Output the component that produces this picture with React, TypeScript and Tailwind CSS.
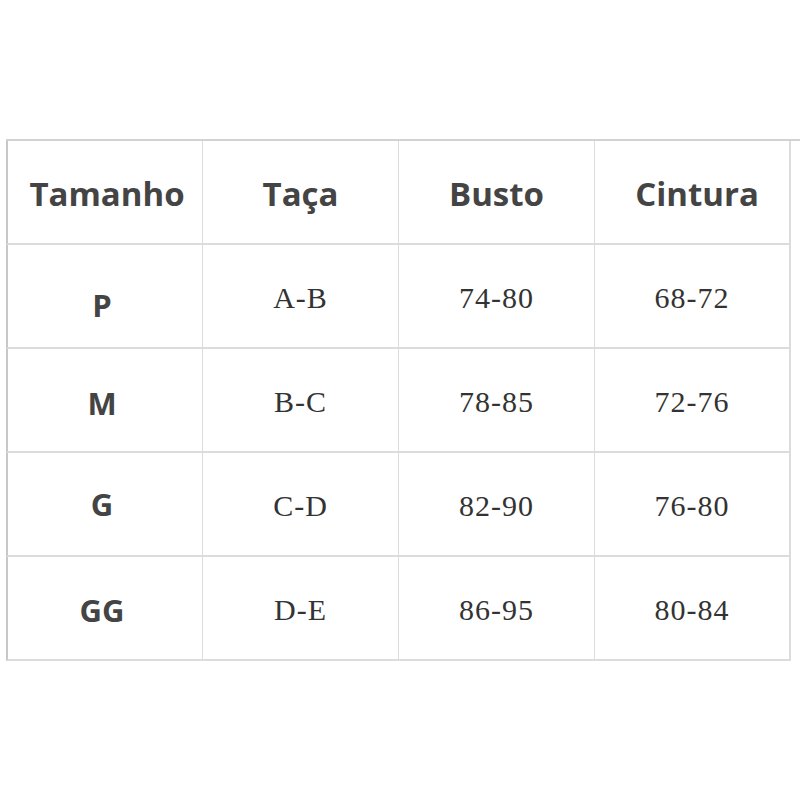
import React from "react";

const rows = [
  { size: "P", cup: "A-B", bust: "74-80", waist: "68-72", off: "pt-[18px]" },
  { size: "M", cup: "B-C", bust: "78-85", waist: "72-76", off: "pt-[6px]" },
  { size: "G", cup: "C-D", bust: "82-90", waist: "76-80", off: "" },
  { size: "GG", cup: "D-E", bust: "86-95", waist: "80-84", off: "pt-[4px]" },
];

const sans = "font-['Open_Sans',sans-serif] font-bold text-[#444444]";
const serif = "font-['Liberation_Serif',serif] text-[30px] tracking-[1px] text-[#333333]";

export default function App() {
  return (
    <div className="w-[800px] h-[800px] bg-white overflow-hidden pt-[139px] pl-[6px]">
      <div className="grid grid-cols-[197px_196px_196px_196px_1fr] border-t-2 border-[#d2d2d2]">
        {/* header */}
        <div className={`h-[104px] flex items-center justify-center border-l-2 border-l-[#c8c8c8] border-r border-b-2 border-[#dcdcdc] pt-[4px] pl-[4px] ${sans} text-[33px]`}>Tamanho</div>
        <div className={`h-[104px] flex items-center justify-center border-r border-b-2 border-[#dcdcdc] pt-[4px] ${sans} text-[33px]`}>Taça</div>
        <div className={`h-[104px] flex items-center justify-center border-r border-b-2 border-[#dcdcdc] pt-[4px] ${sans} text-[33px]`}>Busto</div>
        <div className={`h-[104px] flex items-center justify-center border-r-2 border-b-2 border-[#dcdcdc] pt-[4px] pl-[10px] ${sans} text-[33px]`}>Cintura</div>
        <div className="h-[104px]"></div>
        {rows.map((r) => (
          <React.Fragment key={r.size}>
            <div className={`h-[104px] flex items-center justify-center border-l-2 border-l-[#c8c8c8] border-r border-b-2 border-[#dcdcdc] pr-[6px] ${r.off} ${sans} text-[31px]`}>{r.size}</div>
            <div className={`h-[104px] flex items-center justify-center border-r border-b-2 border-[#dcdcdc] pt-[2px] ${serif}`}>{r.cup}</div>
            <div className={`h-[104px] flex items-center justify-center border-r border-b-2 border-[#dcdcdc] pt-[2px] ${serif}`}>{r.bust}</div>
            <div className={`h-[104px] flex items-center justify-center border-r-2 border-b-2 border-[#dcdcdc] pt-[2px] ${serif}`}>{r.waist}</div>
            <div className="h-[104px]"></div>
          </React.Fragment>
        ))}
      </div>
    </div>
  );
}
